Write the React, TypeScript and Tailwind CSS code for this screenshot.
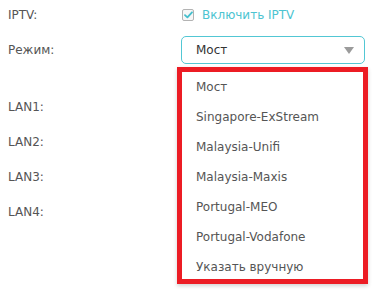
import { useState } from 'react'

const MODES = [
  'Мост',
  'Singapore-ExStream',
  'Malaysia-Unifi',
  'Malaysia-Maxis',
  'Portugal-MEO',
  'Portugal-Vodafone',
  'Указать вручную',
]

const LANS = ['LAN1:', 'LAN2:', 'LAN3:', 'LAN4:']

function CheckBox({ checked }: { checked: boolean }) {
  return (
    <span className="flex h-[12px] w-[12px] items-center justify-center rounded-[2px] border border-[#b3b3b3] bg-[#f7f7f7]">
      {checked && (
        <svg width="9" height="8" viewBox="0 0 9 8" fill="none">
          <path d="M1 4.2 L3.4 6.4 L8 1.3" stroke="#45bfcd" strokeWidth="1.8" strokeLinecap="round" strokeLinejoin="round" />
        </svg>
      )}
    </span>
  )
}

export default function App() {
  const [mode, setMode] = useState('Мост')
  const [open, setOpen] = useState(true)

  return (
    <div className="relative h-[297px] w-[374px] bg-white pl-[8px] text-[12px] text-[#555] font-['DejaVu_Sans',Verdana,sans-serif]">
      <div className="flex h-[30px] items-center">
        <span className="w-[174px]">IPTV:</span>
        <label className="flex items-center gap-[8px] text-[#4cc4d1]">
          <CheckBox checked />
          Включить IPTV
        </label>
      </div>

      <div className="mt-[6px] flex h-[28px] items-center">
        <span className="w-[173px]">Режим:</span>
        <div className="relative">
          <button
            onClick={() => setOpen(!open)}
            className="flex h-[28px] w-[184px] items-center justify-between rounded-[5px] border border-[#52c7d4] bg-white pl-[14px] pr-[10px] text-[#333]"
          >
            <span>{mode}</span>
            <svg width="10" height="7" viewBox="0 0 10 7">
              <path d="M0 0 H10 L5 7 Z" fill="#9b9b9b" />
            </svg>
          </button>

          {open && (
            <ul className="absolute left-[-4px] top-full z-10 mt-[3px] h-[217px] w-[191px] overflow-hidden border-[5px] border-[#ec1c24] bg-white shadow-[0_2px_4px_rgba(0,0,0,0.18)]">
              {MODES.map(m => (
                <li
                  key={m}
                  onClick={() => { setMode(m); setOpen(false) }}
                  className="h-[30px] pl-[14px] leading-[30px] text-[#555]"
                >
                  {m}
                </li>
              ))}
            </ul>
          )}
        </div>
      </div>

      <div className="mt-[25px]">
        {LANS.map(l => (
          <div key={l} className="flex h-[35px] items-center">
            {l}
          </div>
        ))}
      </div>
    </div>
  )
}
